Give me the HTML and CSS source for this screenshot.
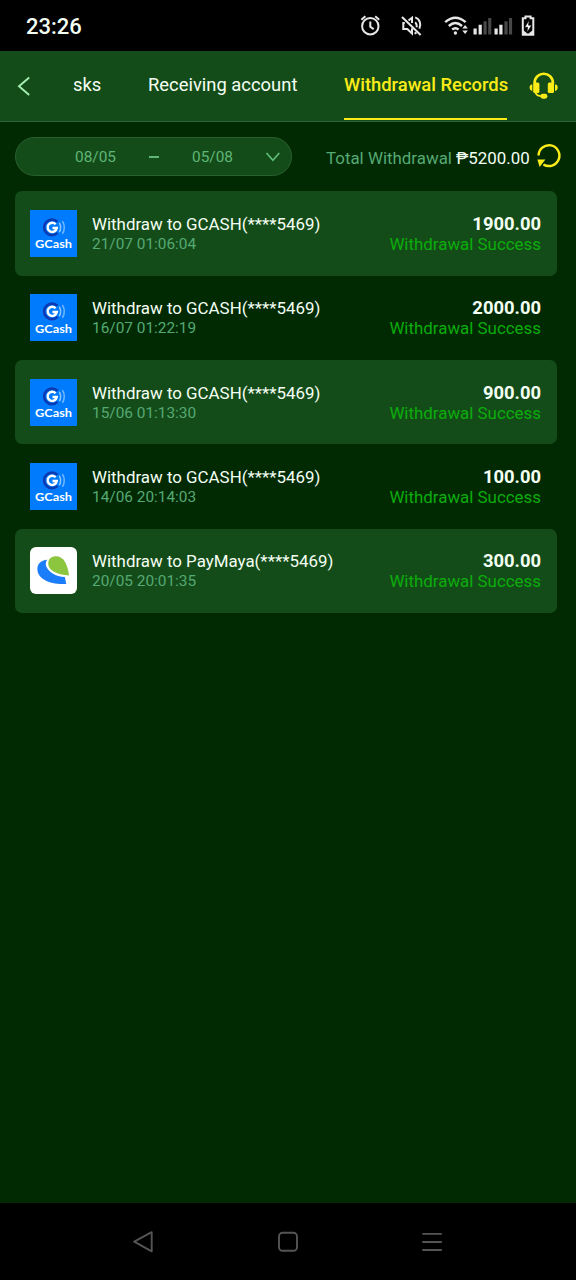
FILE: index.html
```
<!DOCTYPE html>
<html lang="en">
<head>
<meta charset="utf-8">
<title>Withdrawal Records</title>
<link rel="stylesheet" href="styles.css">
</head>
<body>
<svg width="0" height="0" class="defs">
  <symbol id="gcash" viewBox="0 0 46 46">
    <rect width="46" height="46" fill="#007bfd"/>
    <path d="M26.8 11.6A7.6 7.6 0 1 0 26.8 22.4" fill="none" stroke="#0a3bb5" stroke-width="2.7"/>
    <path d="M25.1 13.9A4.5 4.5 0 1 0 26.2 17.7H22" fill="none" stroke="#fff" stroke-width="2.4"/>
    <path d="M29 13Q31 17 29 21.2" fill="none" stroke="#8cc8ff" stroke-width="1.5" stroke-linecap="round"/>
    <path d="M32 11.4Q35.2 17 32 22.8" fill="none" stroke="#6fb7ff" stroke-width="1.5" stroke-linecap="round"/>
  </symbol>
</svg>
<header class="status">
  <span class="clock">23:26</span>
  <svg class="status-icons" width="180" height="26" viewBox="0 0 180 26" fill="none" stroke="#e8e8e8">
    <g stroke-width="2"><circle cx="10.3" cy="13.2" r="8.2"/><path d="M10.3 8.5v5.2l3.4 2.4M1.4 6.8l4-3.6M19.2 6.8l-4-3.6"/></g>
    <g stroke-width="2"><path d="M42 4l18.6 18"/><path d="M44.8 10h-1.5v6h4l4.7 4.5v-5.2M48.5 7.5L52 4.8V10M55.2 9.2q1.8 1.6 1.6 5M55.2 4.4c4.8 1.8 6.2 7 4.2 11.3M54.5 20.7l2-1"/></g>
    <g stroke-width="2.4"><path d="M85.2 9.2q10.2-9 20.4 0M88.8 13q6.6-5.8 13.2 0M92.2 16.5q3.2-2.7 6.4 0"/></g>
    <g fill="#e8e8e8" stroke="none"><circle cx="95.4" cy="20" r="1.7"/><path d="M102.3 15.5l2.8-3.4 2.8 3.4zM102.3 17.5l2.8 3.4 2.8-3.4z"/>
      <path d="M113.5 15.5h3.2V21.5h-3.2zM118.6 11.7h3.2v9.8h-3.2zM134.5 15.5h3.2V21.5h-3.2zM139.3 11.7h3.2v9.8h-3.2z"/>
      <path fill="#484848" d="M123.5 8.2h3.2v13.3h-3.2zM128.2 5h3.1v16.5h-3.1zM144.4 8.2h3.2v13.3h-3.2zM149 5h3.1v16.5H149z"/></g>
    <path stroke-width="2" d="M162.8 5.2h2.7V3.4h5.1v1.8h2.7v16.5h-10.5z"/><path d="M163 17l5 4 5-4v5h-10z" fill="#e8e8e8" stroke="none"/><path d="M169.2 7.2l-4.5 7h3l-.8 5.2 4.8-7.2h-3.2z" fill="#fff" stroke="#000" stroke-width=".6"/>
  </svg>
</header>
<nav class="tabs">
  <svg class="back" width="14" height="20" viewBox="0 0 14 20"><path d="M12.2 1.5L2 10.3l10.2 8.6" fill="none" stroke="#a5eeb2" stroke-width="1.9"/></svg>
  <span class="tab tab-cut">sks</span>
  <span class="tab tab-account">Receiving account</span>
  <span class="tab tab-active">Withdrawal Records</span>
  <svg class="support" width="30" height="28" viewBox="0 0 30 28">
    <path d="M5.5 11.5C5.5-1.5 24-1.5 24 11.5" fill="none" stroke="#fbec18" stroke-width="2.6"/>
    <rect x="4.2" y="10.4" width="6.2" height="10.6" rx="1.5" fill="#fbec18"/>
    <rect x="18.8" y="10.4" width="6.2" height="10.6" rx="1.5" fill="#fbec18"/>
    <path d="M3.3 12.2v6.8Q.6 18.5.6 15.6T3.3 12.2M26 12.2v6.8q2.7-.5 2.7-3.4T26 12.2" fill="#fbec18"/>
    <path d="M6.5 20.5q.8 3.6 6.5 3.6" fill="none" stroke="#fbec18" stroke-width="1.7"/>
    <rect x="11.4" y="21.8" width="7" height="4.9" rx="2.4" fill="#fbec18"/>
  </svg>
</nav>
<main class="content">
  <section class="filter">
    <div class="range">
      <span class="from">08/05</span><i class="dash"></i><span class="to">05/08</span>
      <svg class="chev" width="16" height="12" viewBox="0 0 16 12"><path d="M1.5 2l6.4 7.2L14.3 2" fill="none" stroke="#5fbd7b" stroke-width="1.7"/></svg>
    </div>
    <span class="total">Total Withdrawal</span><span class="sum">₱5200.00</span>
    <svg class="refresh" width="26" height="26" viewBox="0 0 26 26"><path d="M2.6 12.5A10.4 10.4 0 1 1 7.4 21.4" fill="none" stroke="#fbec18" stroke-width="2.4"/><path d="M1.4 16.6h8L3.6 24z" fill="#fbec18"/></svg>
  </section>
  <section class="list">
    <article class="row"><div class="logo"><svg width="47" height="47" viewBox="0 0 46 46"><use href="#gcash"/></svg><span class="brand">GCash</span></div><div class="info"><span class="name">Withdraw to GCASH(****5469)</span><span class="date">21/07 01:06:04</span></div><div class="result"><span class="amount">1900.00</span><span class="state">Withdrawal Success</span></div></article>
    <article class="row"><div class="logo"><svg width="47" height="47" viewBox="0 0 46 46"><use href="#gcash"/></svg><span class="brand">GCash</span></div><div class="info"><span class="name">Withdraw to GCASH(****5469)</span><span class="date">16/07 01:22:19</span></div><div class="result"><span class="amount">2000.00</span><span class="state">Withdrawal Success</span></div></article>
    <article class="row"><div class="logo"><svg width="47" height="47" viewBox="0 0 46 46"><use href="#gcash"/></svg><span class="brand">GCash</span></div><div class="info"><span class="name">Withdraw to GCASH(****5469)</span><span class="date">15/06 01:13:30</span></div><div class="result"><span class="amount">900.00</span><span class="state">Withdrawal Success</span></div></article>
    <article class="row"><div class="logo"><svg width="47" height="47" viewBox="0 0 46 46"><use href="#gcash"/></svg><span class="brand">GCash</span></div><div class="info"><span class="name">Withdraw to GCASH(****5469)</span><span class="date">14/06 20:14:03</span></div><div class="result"><span class="amount">100.00</span><span class="state">Withdrawal Success</span></div></article>
    <article class="row"><div class="logo"><svg width="47" height="47" viewBox="0 0 47 47"><rect width="47" height="47" rx="6" fill="#fff"/><path d="M17.2 12.8C11 13.3 7.2 17 7.4 22.5 7.8 32 20 38 36.3 37L34.8 30C26 30 17.5 24.5 16 18.5 15.5 16.2 16 14.2 17.2 12.8Z" fill="#1c7dfa"/><path d="M18.2 17C18 11.5 22 9.3 26 9.3 33.5 9.3 37.5 17 39 28.4 28.5 28 19 24.5 18.2 17Z" fill="#8cc63f"/></svg></div><div class="info"><span class="name">Withdraw to PayMaya(****5469)</span><span class="date">20/05 20:01:35</span></div><div class="result"><span class="amount">300.00</span><span class="state">Withdrawal Success</span></div></article>
  </section>
</main>
<footer class="softkeys">
  <svg width="22" height="24" viewBox="0 0 22 24"><path d="M18.7 2.2L1.2 11.7l17.5 9.6z" fill="none" stroke="#555" stroke-width="1.9" stroke-linejoin="round"/></svg>
  <svg width="22" height="24" viewBox="0 0 22 24"><rect x="2" y="2.8" width="18" height="18" rx="3.5" fill="none" stroke="#555" stroke-width="1.9"/></svg>
  <svg width="22" height="24" viewBox="0 0 22 24"><path d="M1.3 3.9h19.5M1.3 12h19.5M1.3 20h19.5" stroke="#555" stroke-width="1.9"/></svg>
</footer>
</body>
</html>
```
FILE: styles.css
```
* { box-sizing: border-box; }
body { margin: 0; width: 576px; height: 1280px; display: flex; flex-direction: column; background: #012a03; color: #f4fff4; font-family: Roboto, sans-serif; overflow: hidden; white-space: nowrap; }
svg { display: block; flex: none; }
.defs { position: absolute; }
.status { height: 51px; flex: none; background: #000; display: flex; align-items: center; padding: 1px 36px 0 26px; }
.clock { flex: 1; font-size: 22px; font-weight: 500; line-height: 26px; padding-top: 2px; }
.tabs { height: 71px; flex: none; display: flex; background: #144c19; border-bottom: 1px solid #2c6340; font-size: 18.4px; line-height: 67px; padding-left: 17px; }
.back { margin: 25px 42px 0 0; }
.tab-cut { width: 75px; }
.tab-account { width: 196px; }
.tab-active { width: 163px; height: 69px; color: #fbec18; font-weight: 500; border-bottom: 2px solid #fbec18; }
.support { margin: 21px 0 0 22px; }
.content { flex: 1; padding: 15px 19px 0 15px; }
.filter { display: flex; height: 40px; margin-right: -10px; }
.range { width: 277px; height: 39px; border: 1px solid #28602f; border-radius: 20px; background: #144c19; color: #5fb677; display: flex; align-items: center; padding-left: 59px; font-size: 15.4px; }
.from { width: 74px; }
.dash { width: 10px; height: 2px; background: #5fb677; margin-right: 33px; }
.to { width: 73px; }
.total { margin-left: 34px; width: 130px; font-size: 16.9px; line-height: 43px; color: #55a974; }
.sum { width: 80px; font-size: 16.9px; line-height: 43px; }
.refresh { margin-top: 6px; }
.list { margin-top: 14.2px; }
.row { display: flex; height: 84.4px; padding: 18.6px 16px 0 15px; border-radius: 7px; }
.row:nth-child(odd) { background: #144c19; }
.logo { display: grid; width: 47px; height: 47px; margin-right: 15px; }
.logo > * { grid-area: 1 / 1; }
.brand { color: #fff; font: 700 11px/14px Lato, sans-serif; text-align: center; padding-top: 27.5px; transform: scaleX(1.16); }
.info, .result { display: flex; flex-direction: column; padding-top: 4px; }
.info { flex: 1; }
.name { font-size: 16.9px; line-height: 20px; }
.date { font-size: 15.4px; line-height: 20px; color: #55a974; }
.result { align-items: flex-end; }
.amount { font-size: 18.4px; font-weight: 700; line-height: 20px; }
.state { font-size: 16.9px; line-height: 20px; color: #0cac0c; }
.softkeys { height: 77px; flex: none; background: #000; display: flex; justify-content: center; gap: 122px; padding-top: 27px; }
```
